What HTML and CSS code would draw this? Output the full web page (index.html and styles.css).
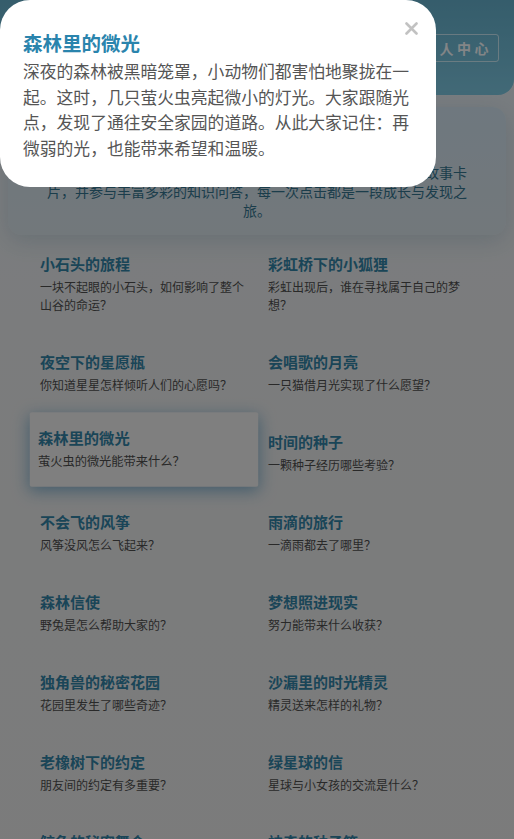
FILE: index.html
```html
<!DOCTYPE html>
<html lang="zh-CN">
<head>
  <meta charset="UTF-8">
  <meta name="viewport" content="width=device-width, initial-scale=1.0">
  <title>童话故事屋</title>
  <link rel="stylesheet" href="styles.css">
</head>
<body>
  <header class="top">
    <h1 class="site-title">童话故事屋</h1>
    <a class="user-btn" href="#">个人中心</a>
  </header>

  <section class="intro">
    <h2>欢迎来到童话故事屋</h2>
    <p>欢迎来到童话森林！在这里，你可以翻开一张张充满想象力的故事卡片，并参与丰富多彩的知识问答，每一次点击都是一段成长与发现之旅。</p>
  </section>

  <div class="cards">
    <div class="card">
      <h3>小石头的旅程</h3>
      <p>一块不起眼的小石头，如何影响了整个山谷的命运？</p>
    </div>
    <div class="card">
      <h3>彩虹桥下的小狐狸</h3>
      <p>彩虹出现后，谁在寻找属于自己的梦想？</p>
    </div>
    <div class="card">
      <h3>夜空下的星愿瓶</h3>
      <p>你知道星星怎样倾听人们的心愿吗？</p>
    </div>
    <div class="card">
      <h3>会唱歌的月亮</h3>
      <p>一只猫借月光实现了什么愿望？</p>
    </div>
    <div class="card active">
      <h3>森林里的微光</h3>
      <p>萤火虫的微光能带来什么？</p>
    </div>
    <div class="card">
      <h3>时间的种子</h3>
      <p>一颗种子经历哪些考验？</p>
    </div>
    <div class="card">
      <h3>不会飞的风筝</h3>
      <p>风筝没风怎么飞起来？</p>
    </div>
    <div class="card">
      <h3>雨滴的旅行</h3>
      <p>一滴雨都去了哪里？</p>
    </div>
    <div class="card">
      <h3>森林信使</h3>
      <p>野兔是怎么帮助大家的？</p>
    </div>
    <div class="card">
      <h3>梦想照进现实</h3>
      <p>努力能带来什么收获？</p>
    </div>
    <div class="card">
      <h3>独角兽的秘密花园</h3>
      <p>花园里发生了哪些奇迹？</p>
    </div>
    <div class="card">
      <h3>沙漏里的时光精灵</h3>
      <p>精灵送来怎样的礼物？</p>
    </div>
    <div class="card">
      <h3>老橡树下的约定</h3>
      <p>朋友间的约定有多重要？</p>
    </div>
    <div class="card">
      <h3>绿星球的信</h3>
      <p>星球与小女孩的交流是什么？</p>
    </div>
    <div class="card">
      <h3>鲸鱼的秘密舞会</h3>
      <p>大海深处藏着怎样的音乐？</p>
    </div>
    <div class="card">
      <h3>神奇的种子箱</h3>
      <p>箱子里会长出什么？</p>
    </div>
  </div>

  <!-- story popup -->
  <div class="overlay">
    <div class="modal">
      <button class="close-btn" aria-label="关闭">
        <svg width="13" height="13" viewBox="0 0 13 13">
          <path d="M1.5 1.5 L11.5 11.5 M11.5 1.5 L1.5 11.5" stroke="#c2c2c2" stroke-width="2.6" stroke-linecap="round"/>
        </svg>
      </button>
      <h3 class="modal-title">森林里的微光</h3>
      <p class="modal-text">深夜的森林被黑暗笼罩，小动物们都害怕地聚拢在一起。这时，几只萤火虫亮起微小的灯光。大家跟随光点，发现了通往安全家园的道路。从此大家记住：再微弱的光，也能带来希望和温暖。</p>
    </div>
  </div>
</body>
</html>
```

FILE: styles.css
```css
body {
  margin: 0;
  font-family: "Noto Sans CJK SC", "Noto Sans", sans-serif;
  background: linear-gradient(to bottom, #d4dee5 0, #dcdedf 320px, #dcdcdc 100%);
  color: #555;
  overflow: hidden;
}

.top {
  height: 95px;
  box-sizing: border-box;
  padding: 0 15px 0 22px;
  display: flex;
  align-items: center;
  justify-content: space-between;
  background: linear-gradient(to bottom, #5fa6c0, #76bcd4);
  border-radius: 0 0 16px 16px;
}
.site-title {
  margin: 0;
  font-size: 22px;
  color: #fff;
}
.user-btn {
  padding: 5px 6px 5px 9px;
  font-size: 14px;
  line-height: 16px;
  font-weight: bold;
  letter-spacing: 3.5px;
  color: #e8eef0;
  text-decoration: none;
  border: 1px solid rgba(255, 255, 255, 0.55);
  border-radius: 3px;
}

.intro {
  margin: 12px 8px 4px;
  padding: 20px 36px 15px;
  text-align: center;
  border-radius: 14px;
  background: linear-gradient(to bottom, #c6d7e2, #ccd6dc);
  box-shadow: 0 6px 22px rgba(60, 110, 140, 0.2);
}
.intro h2 {
  margin: 0 0 8px;
  font-size: 20px;
  line-height: 28px;
  color: #2f86ab;
}
.intro p {
  margin: 0;
  font-size: 14px;
  line-height: 19px;
  color: #306d86;
}

.cards {
  display: grid;
  grid-template-columns: 1fr 1fr;
  gap: 7px 4px;
  padding: 0 30px 20px 32px;
}
.card {
  padding: 14px 8px 16px;
  border-radius: 2px;
}
.card h3 {
  margin: 0 0 3px;
  font-size: 15px;
  line-height: 22px;
  color: #2f7b9c;
}
.card p {
  margin: 0;
  font-size: 12px;
  line-height: 18px;
  color: #4a4a4a;
}
.card.active {
  background: #e2e2e2;
  transform: translateY(-4px) scale(1.02);
  box-shadow: 0 4px 16px rgba(40, 120, 170, 0.55);
}

.overlay {
  position: fixed;
  inset: 0;
  background: rgba(0, 0, 0, 0.44);
}
.modal {
  position: absolute;
  top: 0;
  left: 0;
  width: 436px;
  box-sizing: border-box;
  padding: 30px 20px 26px 23px;
  background: #fff;
  border-radius: 30px;
}
.close-btn {
  position: absolute;
  top: 22px;
  right: 18px;
  padding: 0;
  border: none;
  background: none;
  cursor: pointer;
}
.modal-title {
  margin: 0 0 3px;
  font-size: 19.5px;
  line-height: 26px;
  color: #2a84ad;
}
.modal-text {
  margin: 0;
  font-size: 16.8px;
  line-height: 25.5px;
  color: #555;
}
```
